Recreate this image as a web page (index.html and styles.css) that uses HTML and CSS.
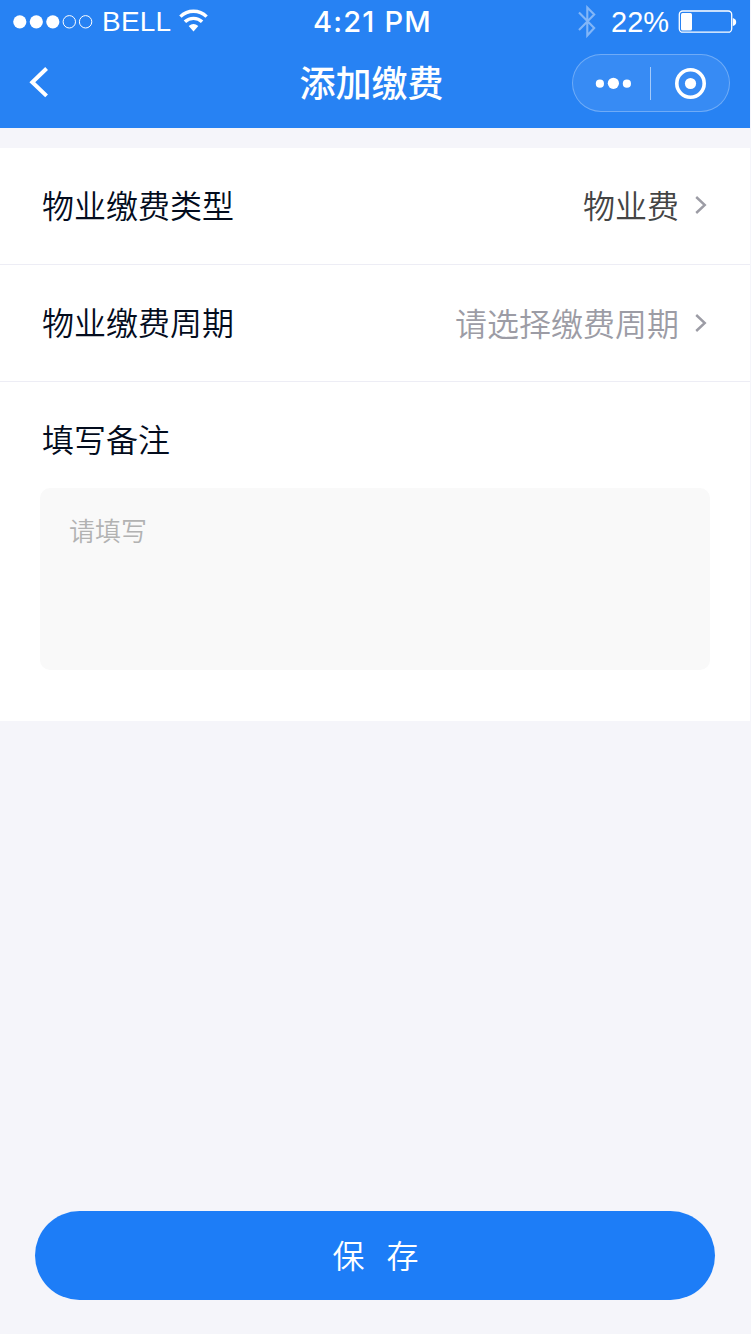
FILE: index.html
```html
<!DOCTYPE html>
<html lang="zh-CN">
<head>
<meta charset="utf-8">
<title>添加缴费</title>
<link rel="stylesheet" href="styles.css">
</head>
<body>
<div class="page">
  <header class="header">
    <div class="status">
      <div class="status-left">
        <svg class="signal" width="80" height="14" viewBox="0 0 80 14" fill="#fff">
          <circle cx="6.8" cy="6.8" r="6.6"/><circle cx="23.3" cy="6.8" r="6.6"/><circle cx="39.8" cy="6.8" r="6.6"/>
          <g fill="none" stroke="#fff"><circle cx="56.3" cy="6.8" r="6.2"/><circle cx="72.6" cy="6.8" r="6.2"/></g>
        </svg>
        <span class="carrier">BELL</span>
        <svg class="wifi" width="30" height="24" viewBox="0 0 30 24" fill="none" stroke="#fff">
          <path d="M2.4 7.6A18.8 18.8 0 0 1 28.6 7.6" stroke-width="3.4"/>
          <path d="M6.9 12.8A12.4 12.4 0 0 1 24.1 12.8" stroke-width="3.4"/>
          <path d="M10.7 17Q15.5 13.2 20.3 17L15.5 22.4Z" fill="#fff" stroke="none"/>
        </svg>
      </div>
      <div class="time">4:21 PM</div>
      <div class="status-right">
        <svg class="bluetooth" width="18" height="34" viewBox="0 0 18 34" fill="none" stroke="#fff" stroke-width="2.1" opacity=".42">
          <path d="M1 7.5L16.2 23L9.3 30.5V2.5L16.2 9.5L1 25"/>
        </svg>
        <span class="percent">22%</span>
        <svg class="battery" width="59" height="24" viewBox="0 0 59 24">
          <rect x="1.3" y="1" width="52.4" height="21.2" rx="3.5" fill="none" stroke="#fff" stroke-width="1.3"/>
          <rect x="3" y="2.9" width="11" height="17.6" rx="1.5" fill="#fff"/>
          <path d="M54.8 8Q58.2 9 58.2 12Q58.2 15 54.8 16Z" fill="#fff"/>
        </svg>
      </div>
    </div>
    <div class="navbar">
      <svg class="back" width="20" height="32" viewBox="0 0 20 32" fill="none" stroke="#fff" stroke-width="4">
        <path d="M17.6 1.5L3.3 15.2L17.6 28.9"/>
      </svg>
      <h1 class="title">添加缴费</h1>
      <div class="capsule">
        <svg class="more" width="36" height="12" viewBox="0 0 36 12" fill="#fff">
          <circle cx="4.9" cy="6.7" r="4.1"/><circle cx="18.4" cy="6.3" r="5.6"/><circle cx="31.9" cy="6.7" r="4.1"/>
        </svg>
        <span class="divider"></span>
        <svg class="target" width="32" height="32" viewBox="0 0 32 32">
          <circle cx="15.5" cy="16.5" r="13.7" fill="none" stroke="#fff" stroke-width="3.6"/><circle cx="15.5" cy="16.5" r="5.6" fill="#fff"/>
        </svg>
      </div>
    </div>
  </header>

  <main class="form">
    <div class="row">
      <span class="label">物业缴费类型</span>
      <span class="value">物业费</span>
      <svg class="arrow" width="12" height="20" viewBox="0 0 12 20"><path d="M1.2 2L9.8 10L1.2 18"/></svg>
    </div>
    <div class="row">
      <span class="label">物业缴费周期</span>
      <span class="value placeholder">请选择缴费周期</span>
      <svg class="arrow" width="12" height="20" viewBox="0 0 12 20"><path d="M1.2 3L9.8 11L1.2 19"/></svg>
    </div>
    <div class="note">
      <div class="label">填写备注</div>
      <div class="textarea">请填写</div>
    </div>
  </main>

  <button class="save">保<span class="gap"></span>存</button>
</div>
</body>
</html>
```

FILE: styles.css
```css
* { box-sizing: border-box; }
body {
  margin: 0;
  background: #f5f5fa;
  font-family: "Noto Sans CJK SC", sans-serif;
  font-weight: 350;
}
.page {
  display: flex;
  flex-direction: column;
  width: 750px;
  height: 1334px;
}
svg { display: block; flex: none; }
.header {
  height: 128px;
  background: #2782f3;
  color: #fff;
}
.status {
  display: grid;
  grid-template-columns: 250px 1fr 250px;
  grid-template-rows: 42px;
  height: 42px;
  padding-top: 1px;
  align-items: center;
  font-family: "Liberation Sans", sans-serif;
  font-weight: 400;
  white-space: nowrap;
}
.status-left, .status-right { display: flex; align-items: center; }
.status-left { padding-left: 13px; }
.carrier { margin-left: 9px; font-size: 28px; line-height: 42px; width: 70px; letter-spacing: .2px; }
.wifi { margin-left: 6px; margin-top: -2px; }
.time {
  font: 500 29px/42px Inter, sans-serif;
  letter-spacing: 1.2px;
  text-align: center;
  padding-right: 5px;
}
.status-right { padding-left: 78px; }
.percent { margin-left: 15px; width: 60px; font-size: 29px; line-height: 40px; padding-bottom: 1px; }
.battery { margin-left: 7px; }
.navbar {
  display: grid;
  grid-template-columns: 178px 1fr 178px;
  align-items: center;
  height: 82px;
}
.back { margin-left: 29px; }
.title {
  margin: 0;
  padding: 0 7px 5px 0;
  font-size: 36px;
  font-weight: 500;
  line-height: 50px;
  text-align: center;
}
.capsule {
  display: flex;
  align-items: center;
  width: 158px;
  height: 58px;
  padding-left: 22px;
  border: 1px solid rgba(255, 255, 255, .28);
  border-radius: 29px;
  background: rgba(255, 255, 255, .08);
}
.divider {
  width: 1px;
  height: 33px;
  margin: 0 24px 0 19px;
  background: rgba(255, 255, 255, .55);
}
.form {
  height: 573px;
  margin-top: 20px;
  background: #fff;
}
.row {
  display: flex;
  align-items: center;
  height: 117px;
  padding: 0 43px 2px 42px;
  border-bottom: 1px solid #ededf5;
}
.label, .value { font-size: 32px; line-height: 46px; }
.label { color: #030c1d; }
.row .label, .row .value { padding-bottom: 3px; }
.value { margin-left: auto; color: #444; }
.row .placeholder { padding-bottom: 1px; color: #9c9ca5; }
.arrow {
  margin-left: 16px;
  fill: none;
  stroke: #9c9ca5;
  stroke-width: 2.4;
}
.note { padding: 33px 40px 0; }
.note .label { padding-left: 2px; }
.textarea {
  height: 182px;
  margin-top: 27px;
  padding: 23px 29px;
  border-radius: 10px;
  background: #f9f9f9;
  color: #b2b2b2;
  font-size: 26px;
  line-height: 38px;
}
.save {
  display: flex;
  align-items: center;
  justify-content: center;
  width: 680px;
  height: 89px;
  margin: auto 35px 34px;
  padding: 0 0 3px 1px;
  border: 0;
  border-radius: 45px;
  background: #1d7df7;
  color: #fff;
  font: 350 32px/46px "Noto Sans CJK SC", sans-serif;
}
.gap { width: 22px; }
```
